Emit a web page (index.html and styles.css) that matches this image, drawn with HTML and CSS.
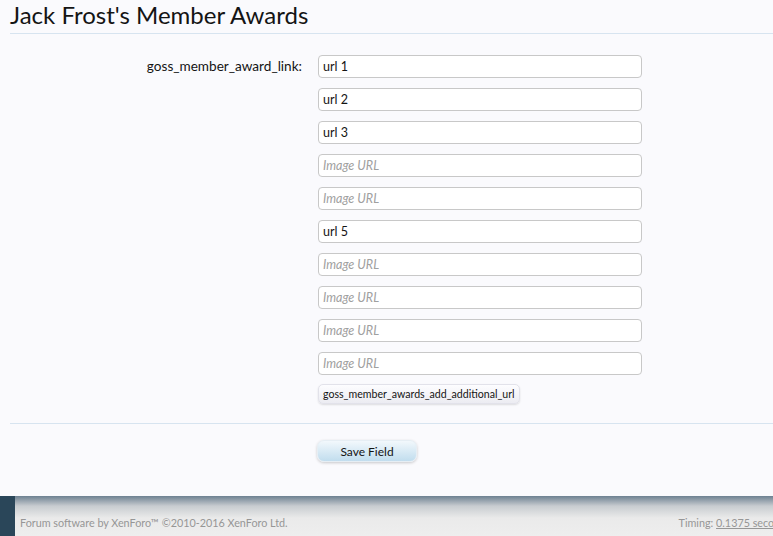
FILE: index.html
```html
<!DOCTYPE html>
<html lang="en">
<head>
  <meta charset="UTF-8" />
  <title>Jack Frost's Member Awards</title>
  <link rel="stylesheet" href="styles.css">
</head>
<body>

  <div class="title-bar">
    <h1>Jack Frost's Member Awards</h1>
  </div>

  <form class="field-form">
    <div class="form-row">
      <label class="ctrl-label">goss_member_award_link:</label>
      <div class="ctrl-unit">
        <input class="text-ctrl" type="text" value="url 1">
        <input class="text-ctrl" type="text" value="url 2">
        <input class="text-ctrl" type="text" value="url 3">
        <input class="text-ctrl" type="text" placeholder="Image URL">
        <input class="text-ctrl" type="text" placeholder="Image URL">
        <input class="text-ctrl" type="text" value="url 5">
        <input class="text-ctrl" type="text" placeholder="Image URL">
        <input class="text-ctrl" type="text" placeholder="Image URL">
        <input class="text-ctrl" type="text" placeholder="Image URL">
        <input class="text-ctrl" type="text" placeholder="Image URL">
        <button type="button" class="small-button">goss_member_awards_add_additional_url</button>
      </div>
    </div>

    <div class="submit-unit">
      <div class="spacer"></div>
      <button type="button" class="primary-button">Save Field</button>
    </div>
  </form>

  <div class="footer">
    <div class="footer-edge"></div>
    <div class="footer-inner">
      <span class="copyright">Forum software by XenForo™ ©2010-2016 XenForo Ltd.</span>
      <span class="timing">Timing: <a href="#">0.1375 seconds</a></span>
    </div>
  </div>

</body>
</html>
```

FILE: styles.css
```css
* {
  box-sizing: border-box;
}
html, body {
  overflow: hidden;
}
body {
  margin: 0;
  background: #fafafd;
  font-family: Lato, "Open Sans", sans-serif;
  color: #141414;
}

.title-bar {
  margin-left: 10px;
  height: 34px;
  border-bottom: 1px solid #d7e4f0;
}
.title-bar h1 {
  margin: 0;
  font-size: 24px;
  font-weight: normal;
  line-height: 30px;
  color: #141414;
}

.field-form {
  margin: 0 0 0 10px;
}
.form-row {
  display: grid;
  grid-template-columns: 292px 324px;
  column-gap: 16px;
  padding-top: 21px;
  padding-bottom: 19px;
  border-bottom: 1px solid #d7e4f0;
}
.ctrl-label {
  text-align: right;
  font-size: 13.6px;
  line-height: 23px;
}
.ctrl-unit {
  display: flex;
  flex-direction: column;
  align-items: flex-start;
  gap: 10px;
}
.text-ctrl {
  width: 324px;
  height: 23px;
  margin: 0;
  padding: 2px 4px;
  font-family: Lato, "Open Sans", sans-serif;
  font-size: 12.5px;
  color: #141414;
  background: #fff;
  border: 1px solid #c8c8c8;
  border-radius: 4px;
  outline: none;
}
.text-ctrl::placeholder {
  color: #a0a0a0;
  font-style: italic;
}
.small-button {
  margin-top: -1px;
  height: 20px;
  padding: 0 4px;
  font-family: Lato, "Open Sans", sans-serif;
  font-size: 10.6px;
  color: #141414;
  background: linear-gradient(#fdfdff, #ececf2);
  border: 1px solid #e2e2ea;
  border-radius: 5px;
  box-shadow: 0 1px 2px rgba(0, 0, 0, 0.12);
}

.submit-unit {
  display: grid;
  grid-template-columns: 292px 100px;
  column-gap: 15px;
  padding-top: 16px;
  height: 72px;
}
.primary-button {
  height: 22px;
  font-family: Lato, "Open Sans", sans-serif;
  font-size: 12px;
  color: #141414;
  background: linear-gradient(#f2f8fc, #c1ddee);
  border: 1px solid #e6eef4;
  border-radius: 7px;
  box-shadow: 0 1px 3px rgba(0, 0, 0, 0.2);
}

.footer {
  display: flex;
  height: 41px;
}
.footer-edge {
  width: 15px;
  background: #2a4659;
}
.footer-inner {
  flex: 1;
  display: flex;
  justify-content: space-between;
  align-items: flex-end;
  padding: 0 0 8px 5px;
  margin-right: -18px;
  background: linear-gradient(#6d8191, #c8ccd0 10px, #eaeaea 22px, #eeeeee);
  font-size: 10.8px;
  color: #969696;
}
.timing a {
  color: #969696;
}
```
